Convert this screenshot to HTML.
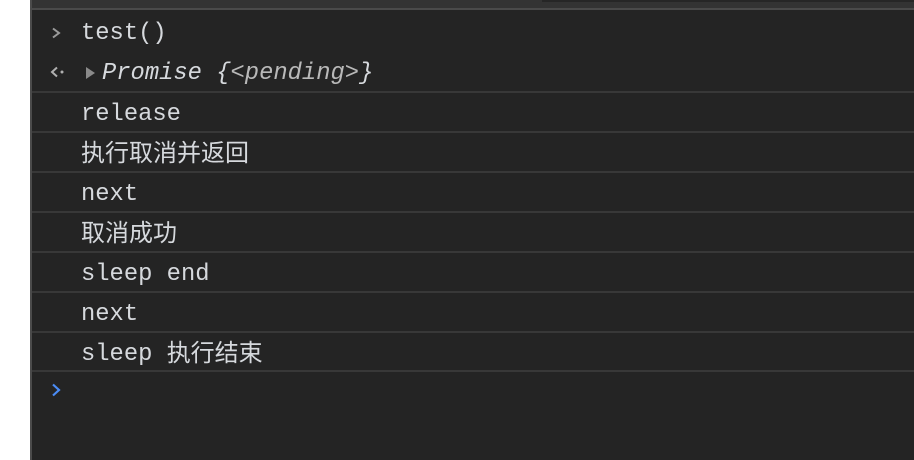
<!DOCTYPE html>
<html><head><meta charset="utf-8"><style>
html,body{margin:0;padding:0;width:914px;height:460px;overflow:hidden;background:#fff;}
#p{position:absolute;left:30px;top:0;width:884px;height:460px;background:#242424;border-left:2px solid #4b4b4b;box-sizing:border-box;}
#top{position:absolute;left:0;top:0;width:100%;height:8px;background:#333;}
#top2{position:absolute;left:510px;top:0;right:0;height:2px;background:#262626;}
#tl{position:absolute;left:0;top:8px;width:100%;height:2px;background:#4a4a4a;}
.r{position:absolute;left:0;width:100%;height:40px;box-sizing:border-box;font-family:"Liberation Mono","Noto Sans CJK SC",monospace;font-size:23.8px;color:#d6d9dd;}
.b{border-bottom:2px solid #383838;}
.t{position:absolute;left:49px;top:2px;height:40px;line-height:40px;white-space:nowrap;}
.cj{font-family:"Noto Sans CJK SC",sans-serif;font-size:24px;display:inline-block;height:40px;line-height:40px;vertical-align:top;}
.t.cj{top:-2px;}
</style></head><body>
<div id="p">
<div id="top"></div><div id="top2"></div><div id="tl"></div>
<div class="r" style="top:12px"><svg style="position:absolute;left:19px;top:15px" width="10" height="12"><path d="M2 1.5L8 6L2 10.5" stroke="#9a9a9a" stroke-width="2" fill="none"/></svg><span class="t">test()</span></div>
<div class="r b" style="top:52px;height:41px"><svg style="position:absolute;left:18px;top:14px" width="16" height="12"><path d="M7 1.5L2 6L7 10.5" stroke="#b0b0b0" stroke-width="2" fill="none"/><circle cx="12" cy="6" r="1.5" fill="#b0b0b0"/></svg><svg style="position:absolute;left:53px;top:14px" width="12" height="14"><path d="M1 1L10 7L1 13Z" fill="#8a8a8a"/></svg><span class="t" style="left:70px;font-style:italic">Promise {<span style="color:#b9b9b9">&lt;pending&gt;</span>}</span></div>
<div class="r b" style="top:93px"><span class="t">release</span></div>
<div class="r b" style="top:133px"><span class="t cj">执行取消并返回</span></div>
<div class="r b" style="top:173px"><span class="t">next</span></div>
<div class="r b" style="top:213px"><span class="t cj">取消成功</span></div>
<div class="r b" style="top:253px"><span class="t">sleep end</span></div>
<div class="r b" style="top:293px"><span class="t">next</span></div>
<div class="r b" style="top:333px;height:39px"><span class="t">sleep <span class="cj" style="margin-top:-4px">执行结束</span></span></div>
<svg style="position:absolute;left:19px;top:383px" width="10" height="14"><path d="M2 1.5L8 7L2 12.5" stroke="#4b8cf5" stroke-width="2.2" fill="none"/></svg>
</div>
</body></html>
